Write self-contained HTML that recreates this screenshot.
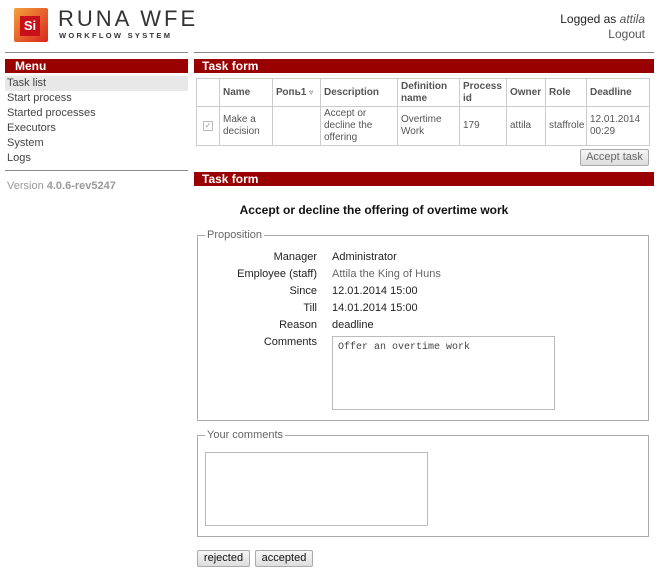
<!DOCTYPE html><html><head><style>
*{margin:0;padding:0;box-sizing:border-box}
body{width:667px;height:569px;background:#fff;font-family:"Liberation Sans",Arial,sans-serif;font-size:11px;color:#222;position:relative;overflow:hidden}
.a{position:absolute}
.bar{position:absolute;background:#990000;color:#fff;font-weight:bold;font-size:12px;height:14px;line-height:14px;padding-left:8px}
.menu div{height:15px;line-height:15px;padding-left:2px;color:#444}
table{border-collapse:collapse;position:absolute;left:196px;top:78px;width:454px;table-layout:fixed}
td,th{border:1px solid #ccc;padding:1px 3px;color:#555;font-size:10px;text-align:left;vertical-align:middle;line-height:12px;overflow:hidden}
th{font-weight:bold;height:28px}
td{height:39px}
.btn{position:absolute;border:1px solid #aaa;background:linear-gradient(#f6f6f6,#ddd);border-radius:2px;font-size:11px;text-align:center}
fieldset{position:absolute;border:1px solid #aaa}
.lg{position:absolute;background:#fff;color:#666;padding:0 2px}
.lab{position:absolute;right:350px;text-align:right}
.val{position:absolute;left:332px}
.ta{position:absolute;border:1px solid #bbb;font-family:"Liberation Mono",monospace;font-size:10px;padding:5px;color:#444}
</style></head><body>
<div class="a" style="left:14px;top:8px;width:34px;height:34px;background:linear-gradient(135deg,#f4a13a,#d8261e);border-radius:2px"></div>
<div class="a" style="left:20px;top:16px;width:20px;height:20px;background:#c8101a;color:#fff;font-weight:bold;font-size:13px;text-align:center;line-height:20px">Si</div>
<div class="a" style="left:58px;top:6px;font-size:22px;letter-spacing:3px;color:#333">RUNA WFE</div>
<div class="a" style="left:59px;top:31px;font-size:7.5px;letter-spacing:2.3px;font-weight:bold;color:#333">WORKFLOW SYSTEM</div>
<div class="a" style="right:22px;top:12px;font-size:12px;color:#222;text-align:right;line-height:15px">Logged as <i style="color:#555">attila</i><br><span style="color:#555">Logout</span></div>
<div class="a" style="left:5px;top:52px;width:183px;height:1px;background:#888"></div>
<div class="a" style="left:194px;top:52px;width:460px;height:1px;background:#888"></div>
<div class="bar" style="left:5px;top:59px;width:183px;padding-left:10px">Menu</div>
<div class="a menu" style="left:5px;top:76px;width:183px">
<div style="background:#e8e8e8">Task list</div><div>Start process</div><div>Started processes</div><div>Executors</div><div>System</div><div>Logs</div></div>
<div class="a" style="left:5px;top:170px;width:183px;height:1px;background:#888"></div>
<div class="a" style="left:7px;top:180px;color:#999">Version <b>4.0.6-rev5247</b></div>
<div class="bar" style="left:194px;top:59px;width:460px">Task form</div>
<table><tr><th style="width:23px"></th><th style="width:53px">Name</th><th style="width:48px">Ропь1 <span style="font-weight:normal;font-size:8px">▿</span></th><th style="width:77px">Description</th><th style="width:62px">Definition name</th><th style="width:47px">Process id</th><th style="width:39px">Owner</th><th style="width:41px">Role</th><th>Deadline</th></tr>
<tr><td style="text-align:center"><span style="display:inline-block;width:10px;height:10px;border:1px solid #bbb;font-size:8px;line-height:8px;color:#999">✓</span></td><td>Make a decision</td><td></td><td>Accept or decline the offering</td><td>Overtime Work</td><td>179</td><td>attila</td><td>staffrole</td><td>12.01.2014 00:29</td></tr></table>
<div class="btn" style="left:580px;top:149px;width:69px;height:17px;line-height:15px;color:#666">Accept task</div>
<div class="bar" style="left:194px;top:172px;width:460px">Task form</div>
<div class="a" style="left:194px;top:203px;width:360px;text-align:center;font-weight:bold;font-size:12px;color:#111;left:194px;width:360px">Accept or decline the offering of overtime work</div>
<fieldset style="left:197px;top:235px;width:452px;height:186px"></fieldset><div class="lg" style="left:205px;top:229px">Proposition</div>
<div class="lab" style="top:251px">Manager</div><div class="val" style="top:251px">Administrator</div>
<div class="lab" style="top:268px">Employee (staff)</div><div class="val" style="top:268px;color:#666">Attila the King of Huns</div>
<div class="lab" style="top:285px">Since</div><div class="val" style="top:285px">12.01.2014 15:00</div>
<div class="lab" style="top:302px">Till</div><div class="val" style="top:302px">14.01.2014 15:00</div>
<div class="lab" style="top:319px">Reason</div><div class="val" style="top:319px">deadline</div>
<div class="lab" style="top:336px">Comments</div>
<div class="ta" style="left:332px;top:336px;width:223px;height:74px">Offer an overtime work</div>
<fieldset style="left:197px;top:435px;width:452px;height:102px"></fieldset><div class="lg" style="left:205px;top:429px">Your comments</div>
<div class="ta" style="left:205px;top:452px;width:223px;height:74px"></div>
<div class="btn" style="left:197px;top:550px;width:53px;height:17px;line-height:15px;color:#111">rejected</div>
<div class="btn" style="left:255px;top:550px;width:58px;height:17px;line-height:15px;color:#111">accepted</div>
</body></html>
